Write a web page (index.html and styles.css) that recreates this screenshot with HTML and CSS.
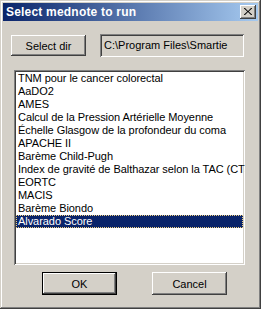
FILE: index.html
```html
<!DOCTYPE html>
<html lang="en">
  <head>
    <meta charset="UTF-8" />
    <title>Select mednote to run</title>
    <link rel="stylesheet" href="styles.css">
  </head>
  <body>
    <div class="window">
      <div class="titlebar">
        <span class="title">Select mednote to run</span>
        <button class="close-btn" type="button">
          <svg width="8" height="7" viewBox="0 0 8 7">
            <path d="M0 0 L1 0 L4 3 L7 0 L8 0 L8 0.5 L4.7 3.5 L8 6.5 L8 7 L7 7 L4 4 L1 7 L0 7 L0 6.5 L3.3 3.5 L0 0.5 Z" fill="#000" />
          </svg>
        </button>
      </div>
      <div class="content">
        <div class="dir-row">
          <button class="win-btn" type="button">Select dir</button>
          <div class="path-field">C:\Program Files\Smartie</div>
        </div>
        <ul class="note-list">
          <li>TNM pour le cancer colorectal</li>
          <li>AaDO2</li>
          <li>AMES</li>
          <li>Calcul de la Pression Artérielle Moyenne</li>
          <li>Échelle Glasgow de la profondeur du coma</li>
          <li>APACHE II</li>
          <li>Barème Child-Pugh</li>
          <li>Index de gravité de Balthazar selon la TAC (CTSI)</li>
          <li>EORTC</li>
          <li>MACIS</li>
          <li>Barème Biondo</li>
          <li class="selected">Alvarado Score</li>
        </ul>
        <div class="actions">
          <button class="win-btn default-btn" type="button">OK</button>
          <button class="win-btn" type="button">Cancel</button>
        </div>
      </div>
    </div>
  </body>
</html>
```

FILE: styles.css
```css
body {
  margin: 0;
  background: #d4d0c8;
  font-family: "Liberation Sans", Arial, sans-serif;
  font-size: 11px;
  color: #000;
}
.window {
  width: 261px;
  height: 309px;
  box-sizing: border-box;
  padding: 3px;
  background: #d4d0c8;
  box-shadow: inset -1px -1px #404040, inset 1px 1px #d4d0c8,
    inset -2px -2px #808080, inset 2px 2px #fff;
}
.titlebar {
  height: 18px;
  display: flex;
  align-items: center;
  padding: 0 2px 0 3px;
  background: linear-gradient(to right, #0a246a, #a6caf0);
}
.title {
  color: #fff;
  font-weight: bold;
  font-size: 12px;
  letter-spacing: 0.2px;
}
.close-btn {
  margin-left: auto;
  width: 16px;
  height: 14px;
  padding: 0;
  border: none;
  background: #d4d0c8;
  display: flex;
  align-items: center;
  justify-content: center;
  box-shadow: inset -1px -1px #404040, inset 1px 1px #fff,
    inset -2px -2px #808080, inset 2px 2px #d4d0c8;
}
.close-btn svg {
  display: block;
  margin: 0 1px 1px 0;
}
.content {
  padding: 13px 0 0 8px;
}
.dir-row {
  display: flex;
  align-items: center;
  gap: 14px;
  height: 23px;
}
.win-btn {
  width: 75px;
  height: 21px;
  padding: 0;
  border: none;
  background: #d4d0c8;
  font-family: "Liberation Sans", Arial, sans-serif;
  font-size: 11px;
  color: #000;
  box-shadow: inset -1px -1px #404040, inset 1px 1px #fff,
    inset -2px -2px #808080, inset 2px 2px #d4d0c8;
}
.path-field {
  width: 144px;
  height: 23px;
  box-sizing: border-box;
  padding: 0 4px;
  line-height: 23px;
  white-space: nowrap;
  overflow: hidden;
  box-shadow: inset 1px 1px #808080, inset -1px -1px #fff,
    inset 2px 2px #404040, inset -2px -2px #d4d0c8;
}
.note-list {
  list-style: none;
  margin: 13px 0 0 3px;
  padding: 2px;
  width: 231px;
  height: 195px;
  box-sizing: border-box;
  background: #fff;
  overflow: hidden;
  box-shadow: inset 1px 1px #808080, inset -1px -1px #fff,
    inset 2px 2px #404040, inset -2px -2px #d4d0c8;
}
.note-list li {
  height: 13px;
  line-height: 13px;
  padding-left: 2px;
  white-space: nowrap;
  letter-spacing: -0.06px;
}
.note-list li.selected {
  background: #0a246a;
  color: #fff;
  padding-left: 1px;
  border: 1px dotted #f0d080;
  height: 11px;
  line-height: 11px;
}
.actions {
  display: flex;
  gap: 35px;
  margin-top: 7px;
  padding-left: 31px;
}
.actions .win-btn {
  height: 23px;
}
.default-btn {
  box-shadow: inset 0 0 0 1px #000, inset -2px -2px #404040,
    inset 2px 2px #fff, inset -3px -3px #808080;
}
```
